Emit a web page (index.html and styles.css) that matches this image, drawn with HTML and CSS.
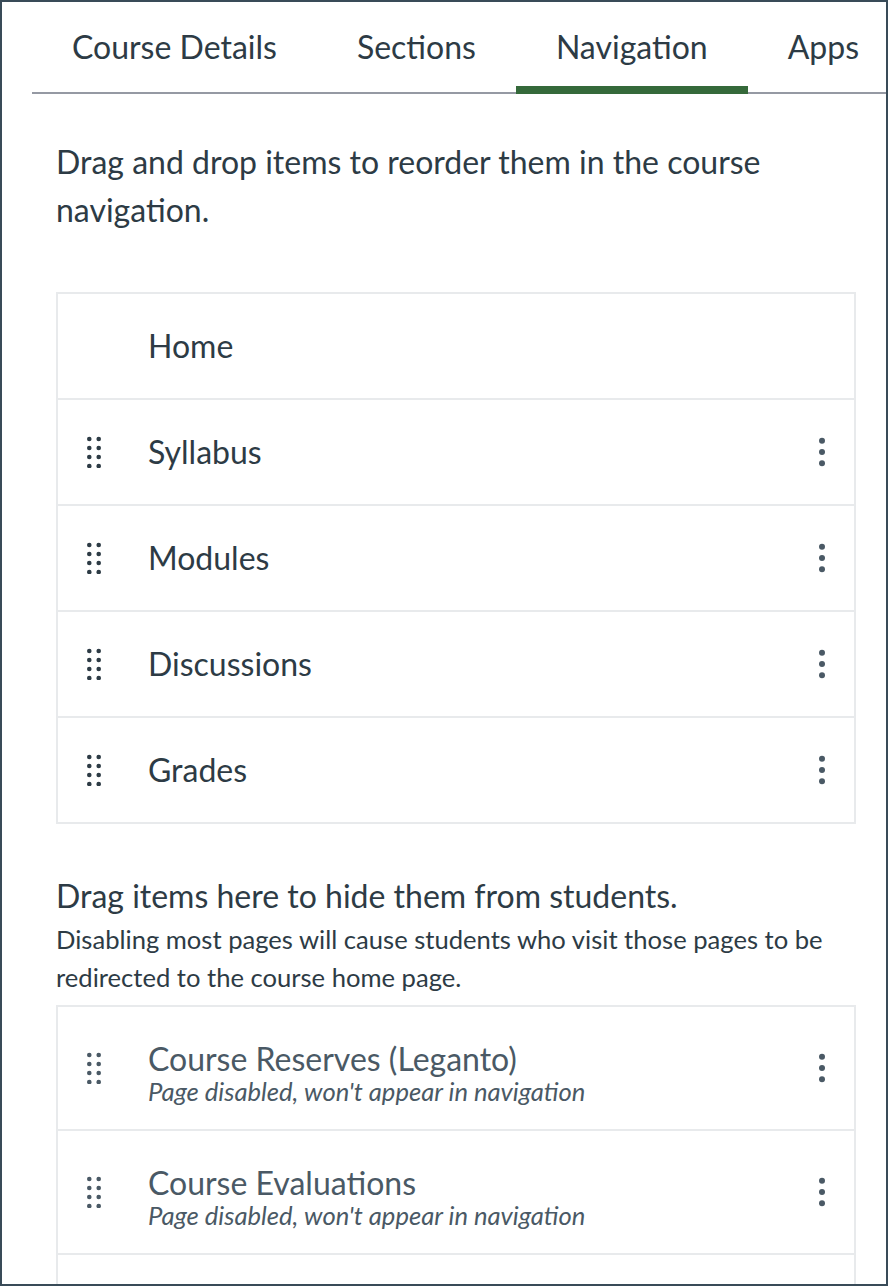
FILE: index.html
```html
<!DOCTYPE html>
<html lang="en">
<head>
  <meta charset="UTF-8">
  <title>Course Settings</title>
  <link rel="stylesheet" href="styles.css">
</head>
<body>
  <div class="frame">
    <div class="tabs">
      <a class="tab">Course Details</a>
      <a class="tab">Sections</a>
      <a class="tab active">Navigation</a>
      <a class="tab">Apps</a>
    </div>

    <p class="intro">Drag and drop items to reorder them in the course navigation.</p>

    <ul class="nav-list">
      <li class="nav-item">
        <span class="handle"></span>
        <span class="nav-label">Home</span>
      </li>
      <li class="nav-item">
        <svg class="handle" viewBox="0 0 16 32"><use href="#grip"/></svg>
        <span class="nav-label">Syllabus</span>
        <svg class="kebab" viewBox="0 0 8 32"><use href="#dots"/></svg>
      </li>
      <li class="nav-item">
        <svg class="handle" viewBox="0 0 16 32"><use href="#grip"/></svg>
        <span class="nav-label">Modules</span>
        <svg class="kebab" viewBox="0 0 8 32"><use href="#dots"/></svg>
      </li>
      <li class="nav-item">
        <svg class="handle" viewBox="0 0 16 32"><use href="#grip"/></svg>
        <span class="nav-label">Discussions</span>
        <svg class="kebab" viewBox="0 0 8 32"><use href="#dots"/></svg>
      </li>
      <li class="nav-item">
        <svg class="handle" viewBox="0 0 16 32"><use href="#grip"/></svg>
        <span class="nav-label">Grades</span>
        <svg class="kebab" viewBox="0 0 8 32"><use href="#dots"/></svg>
      </li>
    </ul>

    <h2 class="hidden-title">Drag items here to hide them from students.</h2>
    <p class="hidden-note">Disabling most pages will cause students who visit those pages to be redirected to the course home page.</p>

    <ul class="nav-list disabled">
      <li class="nav-item">
        <svg class="handle" viewBox="0 0 16 32"><use href="#grip"/></svg>
        <div class="nav-text">
          <span class="nav-label">Course Reserves (Leganto)</span>
          <em class="nav-sub">Page disabled, won't appear in navigation</em>
        </div>
        <svg class="kebab" viewBox="0 0 8 32"><use href="#dots"/></svg>
      </li>
      <li class="nav-item">
        <svg class="handle" viewBox="0 0 16 32"><use href="#grip"/></svg>
        <div class="nav-text">
          <span class="nav-label">Course Evaluations</span>
          <em class="nav-sub">Page disabled, won't appear in navigation</em>
        </div>
        <svg class="kebab" viewBox="0 0 8 32"><use href="#dots"/></svg>
      </li>
      <li class="nav-item"></li>
    </ul>
  </div>

  <svg class="defs" width="0" height="0">
    <defs>
      <g id="grip">
        <circle cx="3.3" cy="3" r="2.3"/><circle cx="12.7" cy="3" r="2.3"/>
        <circle cx="3.3" cy="12" r="2.3"/><circle cx="12.7" cy="12" r="2.3"/>
        <circle cx="3.3" cy="21" r="2.3"/><circle cx="12.7" cy="21" r="2.3"/>
        <circle cx="3.3" cy="30" r="2.3"/><circle cx="12.7" cy="30" r="2.3"/>
      </g>
      <g id="dots">
        <circle cx="4" cy="4.7" r="3"/><circle cx="4" cy="16" r="3"/><circle cx="4" cy="27.3" r="3"/>
      </g>
    </defs>
  </svg>
</body>
</html>
```

FILE: styles.css
```css
html, body {
  margin: 0;
  padding: 0;
}

body {
  font-family: Lato, "Open Sans", sans-serif;
  color: #2d3b45;
  background-color: #fff;
}

.frame {
  box-sizing: border-box;
  width: 888px;
  height: 1286px;
  padding: 0 0 0 30px;
  border: 2px solid #394b58;
  overflow: hidden;
  background-color: #fff;
}

.tabs {
  display: flex;
  height: 90px;
  border-bottom: 2px solid #9599a3;
  box-sizing: content-box;
}

.tab {
  padding: 0 40px;
  height: 92px;
  box-sizing: border-box;
  font-size: 32px;
  line-height: 90px;
  white-space: nowrap;
}

.tab.active {
  border-bottom: 8px solid #35693a;
}

.intro {
  margin: 44px 96px 0 24px;
  font-size: 32px;
  line-height: 48px;
}

.nav-list {
  list-style: none;
  margin: 58px 30px 0 24px;
  padding: 0;
  border: 2px solid #e8eaec;
  border-bottom: 0;
}

.nav-item {
  display: flex;
  align-items: center;
  height: 106px;
  box-sizing: border-box;
  border-bottom: 2px solid #e8eaec;
  padding: 0 0 0 28px;
}

.handle {
  width: 16px;
  height: 32px;
  margin-right: 46px;
  fill: #2d3b45;
  flex: none;
}

.kebab {
  width: 8px;
  height: 32px;
  margin-left: auto;
  margin-right: 28px;
  fill: #4a5965;
  flex: none;
}

.nav-label {
  font-size: 32px;
  line-height: 40px;
}

.hidden-title {
  margin: 48px 0 0 24px;
  font-size: 32px;
  font-weight: 400;
  line-height: 48px;
}

.hidden-note {
  margin: 0 30px 0 24px;
  font-size: 25.6px;
  line-height: 38px;
}

.disabled {
  margin-top: 9px;
}

.disabled .nav-item {
  height: 124px;
  color: #4a5965;
}

.disabled .handle {
  fill: #4a5965;
}

.nav-text {
  display: flex;
  flex-direction: column;
  padding-top: 7px;
}

.nav-sub {
  margin-top: -1px;
  font-size: 25.6px;
  line-height: 26px;
}

.defs {
  position: absolute;
}
```
